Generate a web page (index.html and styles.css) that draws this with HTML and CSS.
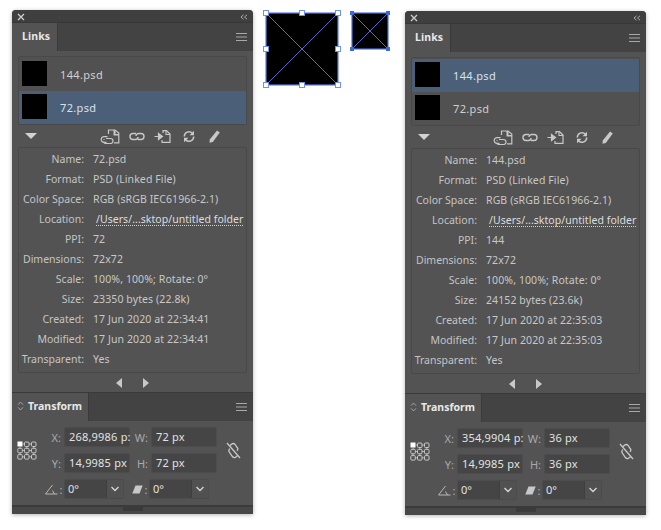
FILE: index.html
```html
<!DOCTYPE html>
<html lang="en">
<head>
<meta charset="utf-8">
<title>Links and Transform panels</title>
<link rel="stylesheet" href="styles.css">
</head>
<body>
<svg class="defs" width="0" height="0" aria-hidden="true">
  <symbol id="i-relink-folder" viewBox="0 0 20 15"><path d="M8.500 5V1H15L18.800 4V13.800H14" fill="none" stroke="currentColor" stroke-width="1.200"/><path d="M13.500 1H15.500V5H18.800V6.500H13.500Z" fill="currentColor"/><path d="M7.500 7.700H4a2.800 2.800 0 0 0 0 5.600H6.500M4.500 10.500H3.500M6 9.500h4.500a2.500 2.500 0 0 1 0 5H5.500A2.300 2.300 0 0 1 3.500 12.500" fill="none" stroke="currentColor" stroke-width="1.200"/></symbol>
  <symbol id="i-link" viewBox="0 0 16 9"><path d="M7 1.500H4a3 3 0 0 0 0 6H6.500A2.500 2.500 0 0 0 9 5M9 7.500h3a3 3 0 0 0 0-6H9.500A2.500 2.500 0 0 0 7 4" fill="none" stroke="currentColor" stroke-width="1.400"/></symbol>
  <symbol id="i-goto" viewBox="0 0 17 13"><path d="M9 3V.7H12.500L16 4V12.300H8V10" fill="none" stroke="currentColor" stroke-width="1.200"/><path d="M12 .7V4.500H16" fill="none" stroke="currentColor" stroke-width="1.100"/><path d="M.5 6.500H6M4.500 3.500 8.500 6.500 4.500 9.500Z" fill="currentColor" stroke="currentColor" stroke-width="1.200"/></symbol>
  <symbol id="i-update" viewBox="0 0 12 13"><path d="M1.300 6.500a4.700 4.700 0 0 1 8-3.400M10.700 6.500a4.700 4.700 0 0 1-8 3.400" fill="none" stroke="currentColor" stroke-width="1.500"/><path d="M11 .8V5.300H6.500ZM1 12.200V7.700H5.500Z" fill="currentColor"/></symbol>
  <symbol id="i-pencil" viewBox="0 0 11 13"><path d="M8 .5 10.800 2.500 3.800 12 .5 12.800 .7 9.500Z" fill="currentColor"/></symbol>
  <symbol id="i-ref" viewBox="0 0 20 19"><g fill="none" stroke="currentColor" stroke-width="1"><rect x="7.500" y="1" width="4.500" height="4.500" rx="1"/><rect x="14.500" y="1" width="4.500" height="4.500" rx="1"/><rect x=".8" y="7.300" width="4.500" height="4.500" rx="1"/><rect x="7.500" y="7.300" width="4.500" height="4.500" rx="1"/><rect x="14.500" y="7.300" width="4.500" height="4.500" rx="1"/><rect x=".8" y="13.600" width="4.500" height="4.500" rx="1"/><rect x="7.500" y="13.600" width="4.500" height="4.500" rx="1"/><rect x="14.500" y="13.600" width="4.500" height="4.500" rx="1"/></g><rect x=".5" y=".5" width="5" height="5" fill="#fff"/><path d="M5.500 3H7.500M12 3H14.500M3 5.500V7.300M3 11.800V13.600M9.800 5.500V7.300M16.800 5.500V7.300M5.300 9.500H7.500M12 9.500H14.500M5.300 15.800H7.500M12 15.800H14.500M9.800 11.800V13.600M16.800 11.800V13.600" stroke="currentColor" stroke-width=".8"/></symbol>
  <symbol id="i-unlink" viewBox="0 0 15 17"><path d="M1 1 14 16" fill="none" stroke="currentColor" stroke-width="1.300"/><path d="M3.800 3.800 5.500 2.200a2.400 2.400 0 0 1 3.400 0L11.200 5.500a2.400 2.400 0 0 1-.3 3.300M3.800 6.500l-.6 1a2.300 2.300 0 0 0 .2 2.700l3 4.300a2.500 2.500 0 0 0 3.500.4l1.500-1.200" fill="none" stroke="currentColor" stroke-width="1.300"/></symbol>
  <symbol id="i-angle" viewBox="0 0 13 11"><path d="M.5 10H12.500M.5 10 7.500 1M7.500 6.500 9.500 10" fill="none" stroke="currentColor" stroke-width="1"/></symbol>
  <symbol id="i-shear" viewBox="0 0 11 9"><path d="M3.500 .5H10.700L7.500 8.500H.3Z" fill="currentColor"/></symbol>
  <symbol id="i-chev" viewBox="0 0 10 6"><path d="M1.500 1 5 4.500 8.500 1" fill="none" stroke="currentColor" stroke-width="1.300"/></symbol>
  <symbol id="i-x" viewBox="0 0 8 8"><path d="M1 1 7 7M7 1 1 7" stroke="currentColor" stroke-width="1.300"/></symbol>
  <symbol id="i-collapse" viewBox="0 0 8 6"><path d="M3.500 .8 1 3 3.500 5.200M7 .8 4.500 3 7 5.200" fill="none" stroke="currentColor" stroke-width=".9"/></symbol>
  <symbol id="i-menu" viewBox="0 0 11 8"><path d="M0 .5H11M0 4H11M0 7.500H11" stroke="currentColor"/></symbol>
  <symbol id="i-updown" viewBox="0 0 7 10"><path d="M1 3.700 3.500 1 6 3.700M1 6.300 3.500 9 6 6.300" fill="none" stroke="currentColor" stroke-width=".8"/></symbol>
</svg>

<main class="canvas">
  <section class="panel">
    <header class="titlebar"><svg class="ic-x"><use href="#i-x"/></svg><svg class="ic-collapse"><use href="#i-collapse"/></svg></header>
    <div class="tabbar"><div class="tab tab-links">Links</div><svg class="ic-menu"><use href="#i-menu"/></svg></div>
    <div class="links-body">
      <ul class="filelist">
        <li class="file"><span class="thumb"></span><span class="fname">144.psd</span></li>
        <li class="file selected"><span class="thumb"></span><span class="fname">72.psd</span></li>
      </ul>
      <div class="toolbar">
        <span class="disclose"></span>
        <div class="tools">
          <svg class="t1"><use href="#i-relink-folder"/></svg>
          <svg class="t2"><use href="#i-link"/></svg>
          <svg class="t3"><use href="#i-goto"/></svg>
          <svg class="t4"><use href="#i-update"/></svg>
          <svg class="t5"><use href="#i-pencil"/></svg>
        </div>
      </div>
      <dl class="info">
        <div class="row"><dt>Name:</dt><dd>72.psd</dd></div>
        <div class="row"><dt>Format:</dt><dd>PSD (Linked File)</dd></div>
        <div class="row"><dt>Color Space:</dt><dd>RGB (sRGB IEC61966-2.1)</dd></div>
        <div class="row"><dt>Location:</dt><dd class="path"><span>/Users/...sktop/untitled folder</span></dd></div>
        <div class="row"><dt>PPI:</dt><dd>72</dd></div>
        <div class="row"><dt>Dimensions:</dt><dd>72x72</dd></div>
        <div class="row"><dt>Scale:</dt><dd>100%, 100%; Rotate: 0°</dd></div>
        <div class="row"><dt>Size:</dt><dd>23350 bytes (22.8k)</dd></div>
        <div class="row"><dt>Created:</dt><dd>17 Jun 2020 at 22:34:41</dd></div>
        <div class="row"><dt>Modified:</dt><dd>17 Jun 2020 at 22:34:41</dd></div>
        <div class="row"><dt>Transparent:</dt><dd>Yes</dd></div>
      </dl>
      <div class="pager"><span class="arrow-l"></span><span class="arrow-r"></span></div>
    </div>
    <div class="tabbar tabbar-tf"><div class="tab tab-tf"><svg class="ic-updown"><use href="#i-updown"/></svg>Transform</div><svg class="ic-menu"><use href="#i-menu"/></svg></div>
    <div class="tf-body">
      <svg class="ic-ref"><use href="#i-ref"/></svg>
      <div class="tf-grid">
        <label class="lab">X:</label><div class="field">268,9986 p:</div><label class="lab">W:</label><div class="field">72 px</div>
        <label class="lab">Y:</label><div class="field">14,9985 px</div><label class="lab">H:</label><div class="field">72 px</div>
      </div>
      <svg class="ic-unlink"><use href="#i-unlink"/></svg>
      <div class="tf-angles">
        <svg class="ic-angle"><use href="#i-angle"/></svg><span class="colon">:</span><div class="combo"><span class="cval">0°</span><span class="cbtn"><svg class="ic-chev"><use href="#i-chev"/></svg></span></div>
        <svg class="ic-shear"><use href="#i-shear"/></svg><span class="colon">:</span><div class="combo"><span class="cval">0°</span><span class="cbtn"><svg class="ic-chev"><use href="#i-chev"/></svg></span></div>
      </div>
    </div>
    <div class="footbar"><span class="grip"></span></div>
  </section>

  <div class="art">
    <svg class="shape big" viewBox="0 0 82 82">
      <rect x="5" y="5" width="72" height="72" fill="#000" stroke="#5b80e6" stroke-width="1.200"/>
      <path d="M5 5 77 77M77 5 5 77" stroke="#4f6ec4" stroke-width="1"/>
      <g fill="#fff" stroke="#6d92ee" stroke-width="1">
        <rect x="2.500" y="2.500" width="5" height="5"/><rect x="38.500" y="2.500" width="5" height="5"/><rect x="74.500" y="2.500" width="5" height="5"/>
        <rect x="2.500" y="38.500" width="5" height="5"/><rect x="74.500" y="38.500" width="5" height="5"/>
        <rect x="2.500" y="74.500" width="5" height="5"/><rect x="38.500" y="74.500" width="5" height="5"/><rect x="74.500" y="74.500" width="5" height="5"/>
      </g>
    </svg>
    <svg class="shape small" viewBox="0 0 42 42">
      <rect x="3" y="3" width="36" height="36" fill="#000" stroke="#4a72e0" stroke-width="1.200"/>
      <path d="M3 3 39 39M39 3 3 39" stroke="#4f6ec4" stroke-width="1"/>
      <g fill="#3d68dc">
        <rect x="1" y="1" width="4" height="4"/><rect x="37" y="1" width="4" height="4"/><rect x="1" y="37" width="4" height="4"/><rect x="37" y="37" width="4" height="4"/>
      </g>
    </svg>
  </div>

  <section class="panel panel-right">
    <header class="titlebar"><svg class="ic-x"><use href="#i-x"/></svg><svg class="ic-collapse"><use href="#i-collapse"/></svg></header>
    <div class="tabbar"><div class="tab tab-links">Links</div><svg class="ic-menu"><use href="#i-menu"/></svg></div>
    <div class="links-body">
      <ul class="filelist">
        <li class="file selected"><span class="thumb"></span><span class="fname">144.psd</span></li>
        <li class="file"><span class="thumb"></span><span class="fname">72.psd</span></li>
      </ul>
      <div class="toolbar">
        <span class="disclose"></span>
        <div class="tools">
          <svg class="t1"><use href="#i-relink-folder"/></svg>
          <svg class="t2"><use href="#i-link"/></svg>
          <svg class="t3"><use href="#i-goto"/></svg>
          <svg class="t4"><use href="#i-update"/></svg>
          <svg class="t5"><use href="#i-pencil"/></svg>
        </div>
      </div>
      <dl class="info">
        <div class="row"><dt>Name:</dt><dd>144.psd</dd></div>
        <div class="row"><dt>Format:</dt><dd>PSD (Linked File)</dd></div>
        <div class="row"><dt>Color Space:</dt><dd>RGB (sRGB IEC61966-2.1)</dd></div>
        <div class="row"><dt>Location:</dt><dd class="path"><span>/Users/...sktop/untitled folder</span></dd></div>
        <div class="row"><dt>PPI:</dt><dd>144</dd></div>
        <div class="row"><dt>Dimensions:</dt><dd>72x72</dd></div>
        <div class="row"><dt>Scale:</dt><dd>100%, 100%; Rotate: 0°</dd></div>
        <div class="row"><dt>Size:</dt><dd>24152 bytes (23.6k)</dd></div>
        <div class="row"><dt>Created:</dt><dd>17 Jun 2020 at 22:35:03</dd></div>
        <div class="row"><dt>Modified:</dt><dd>17 Jun 2020 at 22:35:03</dd></div>
        <div class="row"><dt>Transparent:</dt><dd>Yes</dd></div>
      </dl>
      <div class="pager"><span class="arrow-l"></span><span class="arrow-r"></span></div>
    </div>
    <div class="tabbar tabbar-tf"><div class="tab tab-tf"><svg class="ic-updown"><use href="#i-updown"/></svg>Transform</div><svg class="ic-menu"><use href="#i-menu"/></svg></div>
    <div class="tf-body">
      <svg class="ic-ref"><use href="#i-ref"/></svg>
      <div class="tf-grid">
        <label class="lab">X:</label><div class="field">354,9904 p:</div><label class="lab">W:</label><div class="field">36 px</div>
        <label class="lab">Y:</label><div class="field">14,9985 px</div><label class="lab">H:</label><div class="field">36 px</div>
      </div>
      <svg class="ic-unlink"><use href="#i-unlink"/></svg>
      <div class="tf-angles">
        <svg class="ic-angle"><use href="#i-angle"/></svg><span class="colon">:</span><div class="combo"><span class="cval">0°</span><span class="cbtn"><svg class="ic-chev"><use href="#i-chev"/></svg></span></div>
        <svg class="ic-shear"><use href="#i-shear"/></svg><span class="colon">:</span><div class="combo"><span class="cval">0°</span><span class="cbtn"><svg class="ic-chev"><use href="#i-chev"/></svg></span></div>
      </div>
    </div>
    <div class="footbar"><span class="grip"></span></div>
  </section>
</main>
</body>
</html>
```
FILE: styles.css
```css
* { box-sizing: border-box; }
html, body { margin: 0; padding: 0; background: #fff; }
body { width: 661px; height: 530px; overflow: hidden; font-family: "Noto Sans", "Open Sans", sans-serif; font-size: 11px; color: #d0d0d0; }
.defs { display: block; height: 0; }
.canvas { display: flex; align-items: flex-start; padding: 10px 0 0 12px; }

.panel { width: 241px; height: 504px; background: #535353; border-radius: 4px 4px 0 0; box-shadow: 0 1px 4px rgba(0,0,0,.3); display: flex; flex-direction: column; flex: none; color: #cfcfcf; }
.panel-right { margin-top: 1px; }

.titlebar { height: 13px; background: #3f3f3f; border-radius: 4px 4px 0 0; display: flex; align-items: center; justify-content: space-between; padding: 0 5px; border-bottom: 1px solid #383838; flex: none; }
.ic-x { width: 8px; height: 8px; color: #cfcfcf; margin-top: 1px; }
.ic-collapse { width: 8px; height: 6px; color: #b8b8b8; margin-top: 1px; }

.tabbar { height: 28px; background: #434343; display: flex; align-items: stretch; justify-content: space-between; flex: none; }
.tab { background: #535353; border-right: 1px solid #3a3a3a; font-weight: 700; font-size: 11px; color: #e8e8e8; display: flex; align-items: center; }
.tab-links { width: 46px; padding: 0 0 2px 10px; font-size: 10.500px; letter-spacing: .1px; }
.tab-tf { width: 77px; padding: 0 0 2px 5px; gap: 4px; letter-spacing: 0; font-size: 10.500px; }
.ic-menu { width: 11px; height: 8px; color: #a8a8a8; align-self: center; margin-right: 6px; }
.ic-updown { width: 7px; height: 10px; color: #b5b5b5; flex: none; }

.links-body { flex: none; height: 341px; padding: 5px 6px 0; display: flex; flex-direction: column; }
.filelist { list-style: none; margin: 0; padding: 1px 0; height: 69px; border: 1px solid #494949; border-radius: 2px; display: flex; flex-direction: column; background: #515151; flex: none; }
.file { height: 33px; display: flex; align-items: center; padding-left: 3px; gap: 13px; flex: none; }
.selected { background: #4b6078; color: #d8e2ee; }
.thumb { width: 25px; height: 25px; background: #000; flex: none; align-self: flex-start; margin-top: 3px; }
.fname { font-size: 11px; letter-spacing: .35px; }

.toolbar { height: 22px; display: flex; align-items: center; flex: none; }
.disclose { width: 0; height: 0; border-left: 6px solid transparent; border-right: 6px solid transparent; border-top: 6px solid #d2d2d2; margin-left: 7px; }
.tools { color: #c8c8c8; display: flex; align-items: center; margin-left: 63px; }
.t1 { width: 20px; height: 15px; }
.t2 { width: 16px; height: 9px; margin-left: 9px; }
.t3 { width: 17px; height: 13px; margin-left: 9px; }
.t4 { width: 12px; height: 13px; margin-left: 12px; }
.t5 { width: 11px; height: 13px; margin-left: 14px; }

.info { margin: 0; height: 226px; border: 1px solid #494949; border-radius: 2px; padding: 1px 0 0; display: flex; flex-direction: column; flex: none; }
.row { display: flex; height: 20px; align-items: center; flex: none; padding-bottom: 1px; }
.row dt { width: 65px; text-align: right; margin: 0; color: #c4c4c4; font-size: 10.500px; white-space: nowrap; }
.row dd { margin: 0 0 0 9px; font-size: 10.500px; letter-spacing: .1px; color: #c8c8c8; white-space: nowrap; }
.row dd.path { margin-left: 12px; color: #dedede; letter-spacing: .05px; }
.path span { border-bottom: 1px dotted #cfcfcf; line-height: 12px; display: inline-block; }

.pager { height: 20px; display: flex; align-items: center; justify-content: center; gap: 21px; flex: none; }
.arrow-l { width: 0; height: 0; border-top: 5px solid transparent; border-bottom: 5px solid transparent; border-right: 6px solid #c8c8c8; }
.arrow-r { width: 0; height: 0; border-top: 5px solid transparent; border-bottom: 5px solid transparent; border-left: 6px solid #c8c8c8; }

.tabbar-tf { border-top: 1px solid #3a3a3a; height: 29px; }

.tf-body { position: relative; height: 84px; flex: none; padding: 6px 0 0 5px; }
.ic-ref { position: absolute; left: 5px; top: 20px; width: 20px; height: 19px; color: #c8c8c8; }
.ic-unlink { position: absolute; left: 214px; top: 21px; width: 15px; height: 17px; color: #c8c8c8; }
.tf-grid { display: grid; grid-template-columns: 47px 66px 21px 66px; grid-auto-rows: 20px; row-gap: 6px; align-items: center; }
.lab { text-align: right; padding-right: 3px; color: #a9a9a9; font-size: 11px; }
.field { height: 20px; background: #454545; border: 1px solid #4c4c4c; border-radius: 2px; color: #e2e2e2; font-size: 11px; letter-spacing: .2px; padding-left: 4px; line-height: 18px; white-space: nowrap; }
.tf-angles { display: flex; align-items: center; margin-top: 6px; padding-left: 28px; height: 20px; }
.ic-angle { width: 13px; height: 11px; color: #b8b8b8; flex: none; }
.ic-shear { width: 11px; height: 9px; color: #c8c8c8; margin-left: 8px; flex: none; }
.colon { width: 6px; text-align: center; color: #b0b0b0; flex: none; }
.combo { width: 60px; height: 20px; display: flex; border: 1px solid #4c4c4c; border-radius: 2px; background: #454545; color: #e2e2e2; flex: none; }
.cval { flex: 1; padding-left: 3px; line-height: 18px; }
.cbtn { width: 17px; background: #515151; border-left: 1px solid #3f3f3f; display: flex; align-items: center; justify-content: center; }
.ic-chev { width: 10px; height: 6px; color: #d8d8d8; }

.footbar { flex: 1; background: #474747; border-top: 2px solid #3b3b3b; display: flex; justify-content: center; align-items: flex-start; min-height: 8px; }
.grip { width: 20px; height: 4px; background: #3a3a3a; }

.art { width: 152px; flex: none; display: flex; align-items: flex-start; gap: 6px; padding-left: 8px; }
.shape { display: block; flex: none; }
.big { width: 82px; height: 82px; margin-top: -2px; }
.small { width: 42px; height: 42px; }
```
